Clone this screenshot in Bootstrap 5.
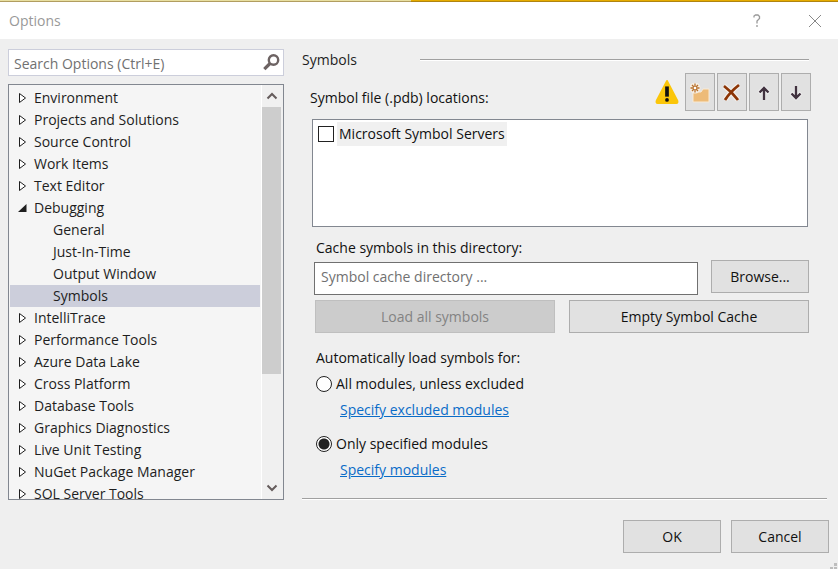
<!DOCTYPE html>
<html lang="en">
<head>
<meta charset="utf-8">
<meta name="viewport" content="width=device-width, initial-scale=1">
<title>Options</title>
<link href="https://cdn.jsdelivr.net/npm/bootstrap@5.3.0/dist/css/bootstrap.min.css" rel="stylesheet">
<style>
body { font-family: "Open Sans", "Noto Sans", sans-serif; font-size: 14px; line-height: 22px; color: #1e1e1e; background: #efefef; }
.accent { height: 2px; background: linear-gradient(#0000 50%, #7a5c2080 50%), linear-gradient(90deg, #e8dfa0 49%, #e6ac00 49%); }
.titlebar { height: 37px; background: #fff; color: #999; padding: 0 16px 0 9px; }
.titlebar button { width: 14px; height: 22px; color: #999; }
.captions { gap: 42px; }
.workspace { min-height: 0; padding: 10px 11px 0 8px; gap: 18px; }
.side { width: 276px; gap: 8px; }
.search { height: 27px; border: 1px solid #cccedb; background: #fff; padding: 0 3px 0 5px; }
.search input { color: #717171; padding: 2px 0 0; }
.search input::placeholder, .cache-dir::placeholder { color: #717171; opacity: 1; }
.tree { min-height: 0; border: 1px solid #828790; background: #f5f5f5; }
.tree ul { padding: 2px 0 0; scrollbar-width: none; }
.tree ul::-webkit-scrollbar { display: none; }
.tree li { height: 22px; flex: none; margin: 0 1px; padding-left: 8px; gap: 7px; }
.tree li svg { width: 9px; height: 12px; }
.tree .leaf { padding-left: 43px; }
.tree .chosen { background: #cccedb; }
.track { width: 22px; background: #f0f0f0; border-left: 1px solid #fff; padding-right: 2px; }
.track button { height: 22px; }
.thumb { background: #cdcdcd; flex: 267; }
.rest { flex: 103; }
.rule { height: 2px; background: #a0a0a0; border-bottom: 1px solid #fff; }
.heading-row { padding-right: 18px; }
.heading { width: 118px; }
.pane { padding: 0 18px 0 8px; color: #111; }
.tools { gap: 2px; margin: 2px -2px 0 0; }
.tools-label { padding-top: 12px; }
.push { height: 33px; background: #e1e1e1; border: 1px solid #adadad; color: #111; padding: 0; }
.push:disabled { background: #ccc; border-color: #bfbfbf; color: #838383; }
.push.tool { width: 30px; height: 38px; }
.locations { height: 108px; margin: 8px 1px 0 2px; border: 1px solid #828790; background: #fff; padding: 2px 5px; }
.locations > div { gap: 3px; }
.locations label { background: #f0f0f0; padding: 1px 2px; }
.tick, .pick { appearance: none; width: 16px; height: 16px; margin: 0; border: 1px solid #222; background: #fff; flex: none; }
.pick { border-radius: 50%; }
.pick:checked { background: radial-gradient(circle, #222 5px, #fff 6px); }
.cache-label { padding: 10px 0 0 6px; }
.cache-row { padding: 1px 0 0 4px; gap: 13px; }
.cache-dir { height: 33px; border: 1px solid #707070; padding: 0 6px 5px; margin-top: 2px; min-width: 0; }
.action-row { padding: 5px 0 0 5px; gap: 14px; }
.load-group { padding: 14px 0 0 6px; }
.choice { gap: 4px; height: 24px; margin-top: 3px; }
.choice.second { margin-top: 11px; }
.detail { padding: 3px 0 0 24px; }
.detail a { color: #0a6cc8; }
.narrow { width: 98px; }
.footer-bar { padding: 20px 9px 16px; gap: 10px; }
.grip { right: 0; bottom: 0; }
</style>
<script src="https://cdn.jsdelivr.net/npm/bootstrap@5.3.0/dist/js/bootstrap.bundle.min.js"></script>
</head>
<body>
<div class="d-flex flex-column vh-100 position-relative">
  <div class="accent flex-shrink-0"></div>
  <header class="titlebar d-flex align-items-center justify-content-between flex-shrink-0">
    <span>Options</span>
    <div class="captions d-flex align-items-center">
      <button class="btn p-0 border-0 lh-1 d-flex align-items-center" aria-label="Help"><svg width="10" height="14" viewBox="0 0 10 14" fill="none" stroke="#999"><path d="M2 3.500V2L3.500 1H6L7.500 2.500V4.500L5 7V9.500M5 11V13" stroke-width="1.300"/></svg></button>
      <button class="btn p-0 border-0 d-flex align-items-center" aria-label="Close"><svg width="14" height="14" viewBox="0 0 14 14" stroke="#888"><path d="M1 1 13 13M13 1 1 13"/></svg></button>
    </div>
  </header>

  <main class="workspace d-flex flex-grow-1">
    <aside class="side d-flex flex-column flex-shrink-0">
      <div class="search d-flex align-items-center flex-shrink-0">
        <input class="border-0 flex-grow-1 bg-transparent" type="text" placeholder="Search Options (Ctrl+E)" aria-label="Search Options">
        <svg width="17" height="17" viewBox="0 0 17 17" fill="none" stroke="#6d6363"><circle cx="10.500" cy="6" r="4.700" stroke-width="2.400"/><path d="M7 9.500 1.300 15.200" stroke-width="3.200"/></svg>
      </div>
      <div class="tree d-flex flex-grow-1">
        <ul class="list-unstyled m-0 d-flex flex-column flex-grow-1 overflow-auto">
          <li class="d-flex align-items-center"><svg><use href="#closed"/></svg>Environment</li>
          <li class="d-flex align-items-center"><svg><use href="#closed"/></svg>Projects and Solutions</li>
          <li class="d-flex align-items-center"><svg><use href="#closed"/></svg>Source Control</li>
          <li class="d-flex align-items-center"><svg><use href="#closed"/></svg>Work Items</li>
          <li class="d-flex align-items-center"><svg><use href="#closed"/></svg>Text Editor</li>
          <li class="d-flex align-items-center"><svg><use href="#open"/></svg>Debugging</li>
          <li class="leaf">General</li>
          <li class="leaf">Just-In-Time</li>
          <li class="leaf">Output Window</li>
          <li class="leaf chosen">Symbols</li>
          <li class="d-flex align-items-center"><svg><use href="#closed"/></svg>IntelliTrace</li>
          <li class="d-flex align-items-center"><svg><use href="#closed"/></svg>Performance Tools</li>
          <li class="d-flex align-items-center"><svg><use href="#closed"/></svg>Azure Data Lake</li>
          <li class="d-flex align-items-center"><svg><use href="#closed"/></svg>Cross Platform</li>
          <li class="d-flex align-items-center"><svg><use href="#closed"/></svg>Database Tools</li>
          <li class="d-flex align-items-center"><svg><use href="#closed"/></svg>Graphics Diagnostics</li>
          <li class="d-flex align-items-center"><svg><use href="#closed"/></svg>Live Unit Testing</li>
          <li class="d-flex align-items-center"><svg><use href="#closed"/></svg>NuGet Package Manager</li>
          <li class="d-flex align-items-center"><svg><use href="#closed"/></svg>SQL Server Tools</li>
        </ul>
        <div class="track d-flex flex-column flex-shrink-0">
          <button class="btn p-0 border-0 d-flex align-items-center justify-content-center" aria-label="Scroll up"><svg width="12" height="8" viewBox="0 0 12 8" fill="none" stroke="#655c5c" stroke-width="2"><path d="M1.500 6.500 6 2 10.500 6.500"/></svg></button>
          <div class="thumb"></div>
          <div class="rest"></div>
          <button class="btn p-0 border-0 d-flex align-items-center justify-content-center" aria-label="Scroll down"><svg width="12" height="8" viewBox="0 0 12 8" fill="none" stroke="#655c5c" stroke-width="2"><path d="M1.500 1.500 6 6 10.500 1.500"/></svg></button>
        </div>
      </div>
    </aside>

    <section class="d-flex flex-column flex-grow-1">
      <div class="heading-row d-flex align-items-center">
        <span class="heading flex-shrink-0">Symbols</span>
        <div class="rule flex-grow-1"></div>
      </div>
      <div class="pane">
        <div class="tools d-flex align-items-center">
          <span class="tools-label me-auto">Symbol file (.pdb) locations:</span>
          <svg class="me-1" width="24" height="26" viewBox="1 0 24 28"><path d="M13 2 24 23Q25 26 23 26H3Q1 26 2 23Z" fill="#fbc60a" stroke="#fbc60a" stroke-width="2" stroke-linejoin="round"/><path d="M11 8H15V19H11Z" fill="#111"/><circle cx="13" cy="22.500" r="2" fill="#111"/></svg>
          <button class="push tool" aria-label="New location"><svg width="20" height="20" viewBox="0 0 20 20"><path d="M3 9H11L13 6H19V19H3Z" fill="#edbb78" stroke="#f8ead6" stroke-width="1"/><circle cx="5" cy="5" r="5.500" fill="#f5eee4"/><path d="M5 .5V9.500M.5 5H9.500M2 2 8 8M8 2 2 8" stroke="#b9722d" stroke-width="1.300"/><circle cx="5" cy="5" r="1.300" fill="#fff"/></svg></button>
          <button class="push tool" aria-label="Remove location"><svg width="20" height="20" viewBox="0 0 20 20" fill="none"><path d="M2 3Q10 9 16 17M17 2Q8 9 3 17" stroke="#f4f0ec" stroke-width="5"/><path d="M2 3Q10 9 16 17M17 2Q8 9 3 17" stroke="#8c3506" stroke-width="2.800"/></svg></button>
          <button class="push tool" aria-label="Move up"><svg width="16" height="16" viewBox="0 0 16 16" fill="none"><path d="M8 15V3M3 8 8 3 13 8" stroke="#f3f3f3" stroke-width="4"/><path d="M8 15V3M3.500 7.500 8 3 12.500 7.500" stroke="#41323f" stroke-width="2.400"/></svg></button>
          <button class="push tool" aria-label="Move down"><svg width="16" height="16" viewBox="0 0 16 16" fill="none"><path d="M8 1V13M3 8 8 13 13 8" stroke="#f3f3f3" stroke-width="4"/><path d="M8 1V13M3.500 8.500 8 13 12.500 8.500" stroke="#41323f" stroke-width="2.400"/></svg></button>
        </div>
        <div class="locations">
          <div class="d-flex align-items-center">
            <input class="tick" type="checkbox" id="ms">
            <label for="ms">Microsoft Symbol Servers</label>
          </div>
        </div>
        <div class="cache-label d-flex"><label for="dir">Cache symbols in this directory:</label></div>
        <div class="cache-row d-flex align-items-start">
          <input class="cache-dir flex-grow-1" type="text" id="dir" placeholder="Symbol cache directory ...">
          <button class="push narrow">Browse...</button>
        </div>
        <div class="action-row d-flex">
          <button class="push w-50" disabled>Load all symbols</button>
          <button class="push w-50">Empty Symbol Cache</button>
        </div>
        <div class="load-group" role="radiogroup" aria-labelledby="auto">
          <div id="auto">Automatically load symbols for:</div>
          <div class="choice d-flex align-items-center"><input class="pick" type="radio" name="mode" id="all"><label for="all">All modules, unless excluded</label></div>
          <div class="detail"><a href="#excluded">Specify excluded modules</a></div>
          <div class="choice second d-flex align-items-center"><input class="pick" type="radio" name="mode" id="only" checked><label for="only">Only specified modules</label></div>
          <div class="detail"><a href="#modules">Specify modules</a></div>
        </div>
      </div>
      <div class="rule mt-auto"></div>
    </section>
  </main>

  <footer class="footer-bar d-flex justify-content-end flex-shrink-0">
    <button class="push narrow">OK</button>
    <button class="push narrow">Cancel</button>
  </footer>
  <svg class="grip position-absolute" width="8" height="6" viewBox="0 0 8 6" fill="#bdbdbd"><path d="M4 0H7V3H4ZM0 4H3V6H0ZM4 4H7V6H4Z"/></svg>
</div>
<svg class="d-none">
  <symbol id="closed" viewBox="0 0 9 12"><path d="M1.500 1.500V10.500L7.500 6Z" fill="#fff" stroke="#1e1e1e"/></symbol>
  <symbol id="open" viewBox="0 0 9 12"><path d="M8.500 2V10H0Z" fill="#1e1e1e"/></symbol>
</svg>
</body>
</html>
